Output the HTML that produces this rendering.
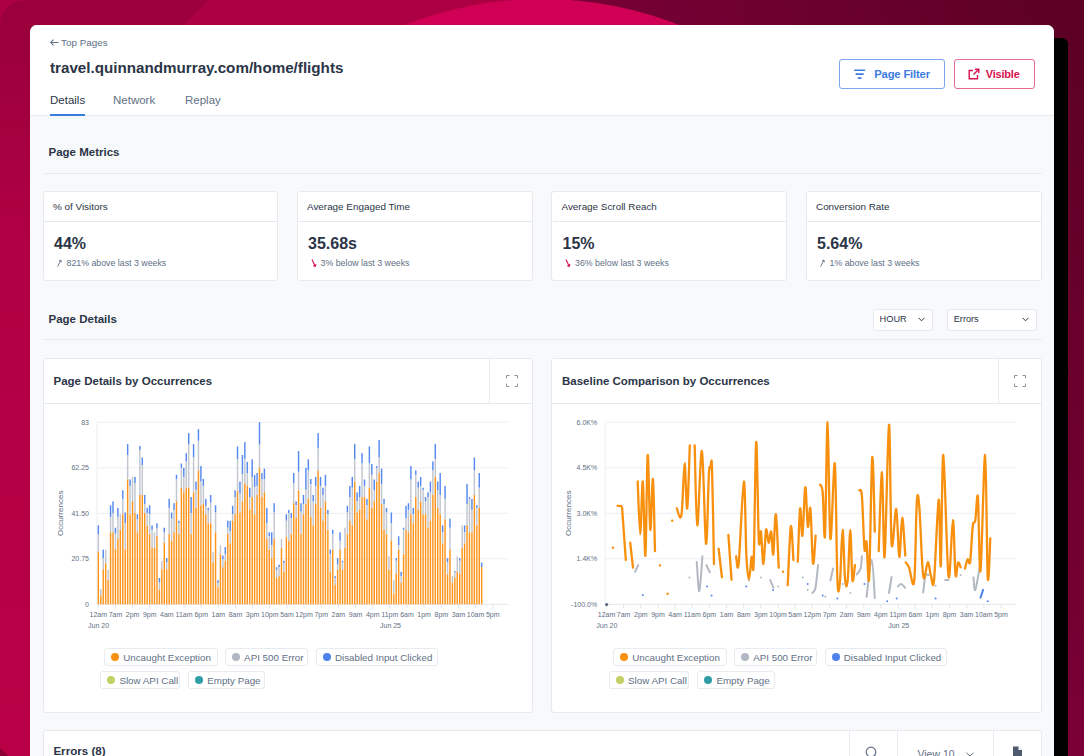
<!DOCTYPE html>
<html><head><meta charset="utf-8">
<style>
*{box-sizing:border-box;margin:0;padding:0}
html,body{width:1084px;height:756px;overflow:hidden}
body{position:relative;font-family:"Liberation Sans",sans-serif;color:#2b3547;background:#b00042}
.abs{position:absolute}
.bg{position:absolute;left:0;top:0}
.card{position:absolute;left:30px;top:25px;width:1024px;height:760px;background:#f8f9fa;border-radius:7px;overflow:hidden}
.shadow{position:absolute;left:1040px;top:38px;width:28px;height:760px;background:#000;border-radius:6px}
.hdr{position:absolute;left:0;top:0;width:1024px;height:91px;background:#fff;border-bottom:1px solid #e7eaee}
.t{position:absolute;white-space:nowrap;line-height:1}
.box{position:absolute;background:#fff;border:1px solid #e6e9ed;border-radius:3px}
.hline{position:absolute;height:1px;background:#e6e9ed}
.vline{position:absolute;width:1px;background:#e6e9ed}
.ax{font-family:"Liberation Sans",sans-serif;font-size:7px;fill:#617085}
.lg{position:absolute;height:18px;background:#fff;border:1px solid #e8ebef;border-radius:3px}
.lg i{position:absolute;left:6px;top:4px;width:8px;height:8px;border-radius:50%}
.lg span{position:absolute;left:18px;top:3.5px;font-size:9.8px;color:#617085;white-space:nowrap;line-height:1}
</style></head><body>
<svg class="bg" width="1084" height="756">
  <defs>
    <linearGradient id="cg" x1="0" y1="0" x2="0" y2="1">
      <stop offset="0" stop-color="#ad0042"/><stop offset="1" stop-color="#b90046"/>
    </linearGradient>
    <linearGradient id="sg" x1="0" y1="0" x2="0" y2="1"><stop offset="0" stop-color="#9c003c"/><stop offset="1" stop-color="#9c003c" stop-opacity="0"/></linearGradient>
    <linearGradient id="mg" x1="0" y1="0" x2="0" y2="1"><stop offset="0" stop-color="#5b0024"/><stop offset="1" stop-color="#7a0035"/></linearGradient><linearGradient id="mg2" x1="0" y1="0" x2="1" y2="0"><stop offset="0" stop-color="#7a0036" stop-opacity="1"/><stop offset="1" stop-color="#7a0036" stop-opacity="0"/></linearGradient>
  </defs>
  <rect width="1084" height="756" fill="url(#cg)"/>
  <rect x="545" y="0" width="539" height="756" fill="url(#mg)"/><rect x="545" y="0" width="539" height="40" fill="url(#mg2)"/>
  <path d="M28,0 L209,0 L175,34 L168,60 L0,60 L0,28 Q0,0 28,0Z" fill="#9c003c"/><rect x="0" y="40" width="30" height="200" fill="url(#sg)"/>
  <circle cx="542" cy="376" r="377" fill="#d00055"/>
  <polygon points="0,748 2,749.5 5,752.5 8,756 0,756" fill="#8c0035"/>
</svg>
<div class="shadow"></div>
<div class="card">
  <div class="hdr">
    <svg class="abs" style="left:19.5px;top:14px" width="9" height="7" fill="none" stroke="#617085" stroke-width="1.1"><path d="M0.8 3.5H8.5M3.5 0.6L0.8 3.5L3.5 6.4"/></svg><div class="t" style="left:31px;top:12.8px;font-size:9.9px;color:#617085">Top Pages</div>
    <div class="t" style="left:20px;top:35.2px;font-size:15.2px;font-weight:700;color:#2b3547">travel.quinnandmurray.com/home/flights</div>
    <div class="t" style="left:20px;top:69.8px;font-size:11.5px;color:#2b3547">Details</div>
    <div class="t" style="left:83px;top:69.8px;font-size:11.5px;color:#617085">Network</div>
    <div class="t" style="left:155px;top:69.8px;font-size:11.5px;color:#617085">Replay</div>
    <div class="abs" style="left:20px;top:89px;width:35px;height:2px;background:#3b7ddd"></div>
    <!-- buttons -->
    <div class="abs" style="left:808.5px;top:34px;width:106px;height:30px;border:1px solid #7ba5ee;border-radius:3px;background:#fff"></div>
    <svg class="abs" style="left:824px;top:44px" width="13" height="11"><rect x="0" y="0.5" width="11.3" height="1.6" rx=".8" fill="#3a7be0"/><rect x="1.4" y="4.3" width="8.5" height="1.6" rx=".8" fill="#3a7be0"/><rect x="3.5" y="8.3" width="4.2" height="1.6" rx=".8" fill="#3a7be0"/></svg>
    <div class="t" style="left:844.3px;top:43.5px;font-size:11.2px;font-weight:700;color:#3a7be0;letter-spacing:-0.15px">Page Filter</div>
    <div class="abs" style="left:923.5px;top:34px;width:81.5px;height:30px;border:1px solid #ea6a8c;border-radius:3px;background:#fff"></div>
    <svg class="abs" style="left:938px;top:43px" width="12" height="12" fill="none" stroke="#d6114f" stroke-width="1.4"><path d="M5 2.5H1.2V10.8H9.5V7"/><path d="M5.5 6.5L10.8 1.2M7 1.2H10.8V5"/></svg>
    <div class="t" style="left:955.7px;top:43.5px;font-size:11px;font-weight:700;color:#d6114f;letter-spacing:-0.2px">Visible</div>
  </div>

  <!-- Page Metrics -->
  <div class="t" style="left:18.5px;top:121.5px;font-size:11.5px;font-weight:700;color:#2b3547">Page Metrics</div>
  <div class="hline" style="left:13px;top:148px;width:999px;background:#e9ecef"></div>

  <div class="box" style="left:12.8px;top:166.2px;width:235.7px;height:90px"></div>
  <div class="box" style="left:266.8px;top:166.2px;width:236.2px;height:90px"></div>
  <div class="box" style="left:521.3px;top:166.2px;width:236.2px;height:90px"></div>
  <div class="box" style="left:775.8px;top:166.2px;width:236.2px;height:90px"></div>
  <div class="hline" style="left:14px;top:196px;width:233.5px"></div>
  <div class="hline" style="left:268px;top:196px;width:233.5px"></div>
  <div class="hline" style="left:522.5px;top:196px;width:234px"></div>
  <div class="hline" style="left:777px;top:196px;width:234px"></div>

  <div class="t" style="left:23px;top:176.8px;font-size:9.9px;color:#2b3547">% of Visitors</div>
  <div class="t" style="left:277px;top:176.8px;font-size:9.9px;color:#2b3547">Average Engaged Time</div>
  <div class="t" style="left:531.5px;top:176.8px;font-size:9.9px;color:#2b3547">Average Scroll Reach</div>
  <div class="t" style="left:786px;top:176.8px;font-size:9.9px;color:#2b3547">Conversion Rate</div>

  <div class="t" style="left:24px;top:210.5px;font-size:16px;font-weight:700;color:#2b3547">44%</div>
  <div class="t" style="left:278px;top:210.5px;font-size:16px;font-weight:700;color:#2b3547">35.68s</div>
  <div class="t" style="left:532.5px;top:210.5px;font-size:16px;font-weight:700;color:#2b3547">15%</div>
  <div class="t" style="left:787px;top:210.5px;font-size:16px;font-weight:700;color:#2b3547">5.64%</div>

  <svg class="abs" style="left:25.5px;top:234px" width="8" height="8" fill="none" stroke="#617085" stroke-width="0.9"><path d="M1.6 7.6L4.9 1.2M2.9 1.9L4.9 1.2L5.4 3.3"/></svg>
  <div class="t" style="left:36.5px;top:234px;font-size:8.8px;color:#617085">821% above last 3 weeks</div>
  <svg class="abs" style="left:279.5px;top:234px" width="8" height="8" fill="none" stroke="#d6114f" stroke-width="1.1"><path d="M2 0.5L5.2 7.3M3.2 6.8L5.3 7.4L5.9 5.2"/></svg>
  <div class="t" style="left:290.5px;top:234px;font-size:8.8px;color:#617085">3% below last 3 weeks</div>
  <svg class="abs" style="left:534px;top:234px" width="8" height="8" fill="none" stroke="#d6114f" stroke-width="1.1"><path d="M2 0.5L5.2 7.3M3.2 6.8L5.3 7.4L5.9 5.2"/></svg>
  <div class="t" style="left:545px;top:234px;font-size:8.8px;color:#617085">36% below last 3 weeks</div>
  <svg class="abs" style="left:788.5px;top:234px" width="8" height="8" fill="none" stroke="#617085" stroke-width="0.9"><path d="M1.6 7.6L4.9 1.2M2.9 1.9L4.9 1.2L5.4 3.3"/></svg>
  <div class="t" style="left:799.5px;top:234px;font-size:8.8px;color:#617085">1% above last 3 weeks</div>

  <!-- Page Details -->
  <div class="t" style="left:18.5px;top:289.1px;font-size:11.5px;font-weight:700;color:#2b3547">Page Details</div>
  <div class="hline" style="left:13px;top:314.3px;width:999px;background:#e9ecef"></div>
  <div class="box" style="left:843px;top:283.5px;width:59.5px;height:22px"></div>
  <div class="t" style="left:849.6px;top:289.7px;font-size:9.2px;color:#2b3547">HOUR</div>
  <svg class="abs" style="left:887.5px;top:292px" width="7" height="5" fill="none" stroke="#2b3547" stroke-width="1"><path d="M0.5 0.8L3.5 3.8L6.5 0.8"/></svg>
  <div class="box" style="left:917px;top:283.5px;width:89.5px;height:22px"></div>
  <div class="t" style="left:923.7px;top:289.7px;font-size:9.2px;color:#2b3547">Errors</div>
  <svg class="abs" style="left:991.5px;top:292px" width="7" height="5" fill="none" stroke="#2b3547" stroke-width="1"><path d="M0.5 0.8L3.5 3.8L6.5 0.8"/></svg>

  <!-- chart cards -->
  <div class="box" style="left:12.5px;top:333px;width:490.7px;height:354.5px"></div>
  <div class="hline" style="left:13.7px;top:378px;width:488.5px"></div>
  <div class="vline" style="left:459px;top:334px;height:44px"></div>
  <div class="t" style="left:23.5px;top:351px;font-size:11.5px;font-weight:700;color:#2b3547">Page Details by Occurrences</div>
  <svg class="abs" style="left:475.5px;top:350px" width="13" height="13" fill="none" stroke="#7f8899" stroke-width="0.9"><path d="M0.5 3.5V0.5H3.5M8.5 0.5H11.5V3.5M11.5 8.5V11.5H8.5M3.5 11.5H0.5V8.5"/></svg>

  <div class="box" style="left:521px;top:333px;width:491px;height:354.5px"></div>
  <div class="hline" style="left:522.2px;top:378px;width:488.8px"></div>
  <div class="vline" style="left:968px;top:334px;height:44px"></div>
  <div class="t" style="left:532px;top:351px;font-size:11.5px;font-weight:700;color:#2b3547">Baseline Comparison by Occurrences</div>
  <svg class="abs" style="left:984px;top:350px" width="13" height="13" fill="none" stroke="#7f8899" stroke-width="0.9"><path d="M0.5 3.5V0.5H3.5M8.5 0.5H11.5V3.5M11.5 8.5V11.5H8.5M3.5 11.5H0.5V8.5"/></svg>

  <!-- legends left -->
  <div class="lg" style="left:74.2px;top:623px;width:113.7px"><i style="background:#f8900f"></i><span>Uncaught Exception</span></div>
  <div class="lg" style="left:195.1px;top:623px;width:83.2px"><i style="background:#b3b9c3"></i><span>API 500 Error</span></div>
  <div class="lg" style="left:285.9px;top:623px;width:122.6px"><i style="background:#4f83ec"></i><span>Disabled Input Clicked</span></div>
  <div class="lg" style="left:70.4px;top:646.4px;width:80.1px"><i style="background:#c3d163"></i><span>Slow API Call</span></div>
  <div class="lg" style="left:158.2px;top:646.4px;width:77.2px"><i style="background:#2e9ea6"></i><span>Empty Page</span></div>
  <!-- legends right -->
  <div class="lg" style="left:583.2px;top:623px;width:113.7px"><i style="background:#f8900f"></i><span>Uncaught Exception</span></div>
  <div class="lg" style="left:704.2px;top:623px;width:83.2px"><i style="background:#b3b9c3"></i><span>API 500 Error</span></div>
  <div class="lg" style="left:794.8px;top:623px;width:122.6px"><i style="background:#4f83ec"></i><span>Disabled Input Clicked</span></div>
  <div class="lg" style="left:579px;top:646.4px;width:80.1px"><i style="background:#c3d163"></i><span>Slow API Call</span></div>
  <div class="lg" style="left:667.4px;top:646.4px;width:77.2px"><i style="background:#2e9ea6"></i><span>Empty Page</span></div>

  <!-- errors card -->
  <div class="box" style="left:12.7px;top:705px;width:999.5px;height:80px"></div>
  <div class="t" style="left:23.4px;top:719.5px;font-size:11.6px;font-weight:700;color:#2b3547">Errors (8)</div>
  <div class="vline" style="left:819px;top:706px;height:60px"></div>
  <div class="vline" style="left:867px;top:706px;height:60px"></div>
  <div class="vline" style="left:963px;top:706px;height:60px"></div>
  <svg class="abs" style="left:835px;top:720.5px" width="13" height="13" fill="none" stroke="#617085" stroke-width="1.2"><circle cx="6" cy="6" r="4.8"/><path d="M9.5 9.5L12.5 12.5"/></svg>
  <div class="t" style="left:887.4px;top:724px;font-size:10.5px;color:#617085">View 10</div>
  <svg class="abs" style="left:935.5px;top:727px" width="8" height="5" fill="none" stroke="#617085" stroke-width="1"><path d="M0.5 0.8L4 4L7.5 0.8"/></svg>
  <svg class="abs" style="left:982px;top:721px" width="11" height="13"><path d="M1 0.5H6.5L10 4V13H1Z" fill="#4f5a6c"/><path d="M6.5 0.5V4H10" fill="#fff"/></svg>
</div>

<svg class="abs" style="left:0;top:0" width="1084" height="756">
<line x1="97" y1="422.2" x2="508" y2="422.2" stroke="#eceef2" stroke-width="1"/>
<line x1="97" y1="467.8" x2="508" y2="467.8" stroke="#eceef2" stroke-width="1"/>
<line x1="97" y1="513.3" x2="508" y2="513.3" stroke="#eceef2" stroke-width="1"/>
<line x1="97" y1="558.8" x2="508" y2="558.8" stroke="#eceef2" stroke-width="1"/>
<line x1="97" y1="604.3" x2="508" y2="604.3" stroke="#e3e6ea" stroke-width="1"/>
<line x1="97" y1="422.2" x2="97" y2="604.3" stroke="#eceef2" stroke-width="1"/>
<text x="89" y="424.8" text-anchor="end" class="ax">83</text>
<text x="89" y="470.40000000000003" text-anchor="end" class="ax">62.25</text>
<text x="89" y="515.9" text-anchor="end" class="ax">41.50</text>
<text x="89" y="561.4" text-anchor="end" class="ax">20.75</text>
<text x="89" y="606.9" text-anchor="end" class="ax">0</text>
<line x1="98.30" y1="604.3" x2="98.30" y2="608" stroke="#e1e4e9" stroke-width="1"/>
<text x="98.30" y="617.3" text-anchor="middle" class="ax">12am</text>
<line x1="115.45" y1="604.3" x2="115.45" y2="608" stroke="#e1e4e9" stroke-width="1"/>
<text x="115.45" y="617.3" text-anchor="middle" class="ax">7am</text>
<line x1="132.60" y1="604.3" x2="132.60" y2="608" stroke="#e1e4e9" stroke-width="1"/>
<text x="132.60" y="617.3" text-anchor="middle" class="ax">2pm</text>
<line x1="149.75" y1="604.3" x2="149.75" y2="608" stroke="#e1e4e9" stroke-width="1"/>
<text x="149.75" y="617.3" text-anchor="middle" class="ax">9pm</text>
<line x1="166.90" y1="604.3" x2="166.90" y2="608" stroke="#e1e4e9" stroke-width="1"/>
<text x="166.90" y="617.3" text-anchor="middle" class="ax">4am</text>
<line x1="184.05" y1="604.3" x2="184.05" y2="608" stroke="#e1e4e9" stroke-width="1"/>
<text x="184.05" y="617.3" text-anchor="middle" class="ax">11am</text>
<line x1="201.20" y1="604.3" x2="201.20" y2="608" stroke="#e1e4e9" stroke-width="1"/>
<text x="201.20" y="617.3" text-anchor="middle" class="ax">6pm</text>
<line x1="218.35" y1="604.3" x2="218.35" y2="608" stroke="#e1e4e9" stroke-width="1"/>
<text x="218.35" y="617.3" text-anchor="middle" class="ax">1am</text>
<line x1="235.50" y1="604.3" x2="235.50" y2="608" stroke="#e1e4e9" stroke-width="1"/>
<text x="235.50" y="617.3" text-anchor="middle" class="ax">8am</text>
<line x1="252.65" y1="604.3" x2="252.65" y2="608" stroke="#e1e4e9" stroke-width="1"/>
<text x="252.65" y="617.3" text-anchor="middle" class="ax">3pm</text>
<line x1="269.80" y1="604.3" x2="269.80" y2="608" stroke="#e1e4e9" stroke-width="1"/>
<text x="269.80" y="617.3" text-anchor="middle" class="ax">10pm</text>
<line x1="286.95" y1="604.3" x2="286.95" y2="608" stroke="#e1e4e9" stroke-width="1"/>
<text x="286.95" y="617.3" text-anchor="middle" class="ax">5am</text>
<line x1="304.10" y1="604.3" x2="304.10" y2="608" stroke="#e1e4e9" stroke-width="1"/>
<text x="304.10" y="617.3" text-anchor="middle" class="ax">12pm</text>
<line x1="321.25" y1="604.3" x2="321.25" y2="608" stroke="#e1e4e9" stroke-width="1"/>
<text x="321.25" y="617.3" text-anchor="middle" class="ax">7pm</text>
<line x1="338.40" y1="604.3" x2="338.40" y2="608" stroke="#e1e4e9" stroke-width="1"/>
<text x="338.40" y="617.3" text-anchor="middle" class="ax">2am</text>
<line x1="355.55" y1="604.3" x2="355.55" y2="608" stroke="#e1e4e9" stroke-width="1"/>
<text x="355.55" y="617.3" text-anchor="middle" class="ax">9am</text>
<line x1="372.70" y1="604.3" x2="372.70" y2="608" stroke="#e1e4e9" stroke-width="1"/>
<text x="372.70" y="617.3" text-anchor="middle" class="ax">4pm</text>
<line x1="389.85" y1="604.3" x2="389.85" y2="608" stroke="#e1e4e9" stroke-width="1"/>
<text x="389.85" y="617.3" text-anchor="middle" class="ax">11pm</text>
<line x1="407.00" y1="604.3" x2="407.00" y2="608" stroke="#e1e4e9" stroke-width="1"/>
<text x="407.00" y="617.3" text-anchor="middle" class="ax">6am</text>
<line x1="424.15" y1="604.3" x2="424.15" y2="608" stroke="#e1e4e9" stroke-width="1"/>
<text x="424.15" y="617.3" text-anchor="middle" class="ax">1pm</text>
<line x1="441.30" y1="604.3" x2="441.30" y2="608" stroke="#e1e4e9" stroke-width="1"/>
<text x="441.30" y="617.3" text-anchor="middle" class="ax">8pm</text>
<line x1="458.45" y1="604.3" x2="458.45" y2="608" stroke="#e1e4e9" stroke-width="1"/>
<text x="458.45" y="617.3" text-anchor="middle" class="ax">3am</text>
<line x1="475.60" y1="604.3" x2="475.60" y2="608" stroke="#e1e4e9" stroke-width="1"/>
<text x="475.60" y="617.3" text-anchor="middle" class="ax">10am</text>
<line x1="492.75" y1="604.3" x2="492.75" y2="608" stroke="#e1e4e9" stroke-width="1"/>
<text x="492.75" y="617.3" text-anchor="middle" class="ax">5pm</text>
<text x="98.6" y="627.5" text-anchor="middle" class="ax">Jun 20</text>
<text x="390.5" y="627.5" text-anchor="middle" class="ax">Jun 25</text>
<text transform="translate(63.2,513.3) rotate(-90)" text-anchor="middle" class="ax" style="font-size:8px">Occurrences</text>
<rect x="97.62" y="525.39" width="1.45" height="8.77" fill="#5689f0"/>
<rect x="97.62" y="534.16" width="1.45" height="17.54" fill="#c1c6cf"/>
<rect x="97.62" y="551.70" width="1.45" height="52.60" fill="#fd951c"/>
<rect x="100.07" y="589.10" width="1.45" height="6.45" fill="#c1c6cf"/>
<rect x="100.07" y="595.55" width="1.45" height="8.75" fill="#fd951c"/>
<rect x="102.51" y="549.64" width="1.45" height="8.51" fill="#5689f0"/>
<rect x="102.51" y="558.15" width="1.45" height="11.09" fill="#c1c6cf"/>
<rect x="102.51" y="569.24" width="1.45" height="35.06" fill="#fd951c"/>
<rect x="104.95" y="549.64" width="1.45" height="13.67" fill="#c1c6cf"/>
<rect x="104.95" y="563.31" width="1.45" height="40.99" fill="#fd951c"/>
<rect x="107.39" y="569.76" width="1.45" height="10.32" fill="#c1c6cf"/>
<rect x="107.39" y="580.08" width="1.45" height="24.22" fill="#fd951c"/>
<rect x="109.83" y="505.28" width="1.45" height="11.61" fill="#5689f0"/>
<rect x="109.83" y="516.88" width="1.45" height="15.48" fill="#c1c6cf"/>
<rect x="109.83" y="532.36" width="1.45" height="71.94" fill="#fd951c"/>
<rect x="112.28" y="501.41" width="1.45" height="11.61" fill="#5689f0"/>
<rect x="112.28" y="513.01" width="1.45" height="19.34" fill="#c1c6cf"/>
<rect x="112.28" y="532.36" width="1.45" height="71.94" fill="#fd951c"/>
<rect x="114.72" y="527.72" width="1.45" height="5.93" fill="#5689f0"/>
<rect x="114.72" y="533.65" width="1.45" height="15.48" fill="#c1c6cf"/>
<rect x="114.72" y="549.12" width="1.45" height="55.18" fill="#fd951c"/>
<rect x="117.16" y="507.86" width="1.45" height="9.03" fill="#5689f0"/>
<rect x="117.16" y="516.88" width="1.45" height="21.92" fill="#c1c6cf"/>
<rect x="117.16" y="538.81" width="1.45" height="65.49" fill="#fd951c"/>
<rect x="119.60" y="514.30" width="1.45" height="15.48" fill="#c1c6cf"/>
<rect x="119.60" y="529.78" width="1.45" height="74.52" fill="#fd951c"/>
<rect x="122.04" y="490.32" width="1.45" height="8.51" fill="#5689f0"/>
<rect x="122.04" y="498.83" width="1.45" height="15.48" fill="#c1c6cf"/>
<rect x="122.04" y="514.30" width="1.45" height="90.00" fill="#fd951c"/>
<rect x="124.48" y="512.50" width="1.45" height="10.83" fill="#5689f0"/>
<rect x="124.48" y="523.33" width="1.45" height="25.79" fill="#c1c6cf"/>
<rect x="124.48" y="549.12" width="1.45" height="55.18" fill="#fd951c"/>
<rect x="126.93" y="444.15" width="1.45" height="10.83" fill="#5689f0"/>
<rect x="126.93" y="454.98" width="1.45" height="24.50" fill="#c1c6cf"/>
<rect x="126.93" y="479.48" width="1.45" height="124.82" fill="#fd951c"/>
<rect x="129.37" y="479.48" width="1.45" height="6.45" fill="#5689f0"/>
<rect x="129.37" y="485.93" width="1.45" height="28.37" fill="#c1c6cf"/>
<rect x="129.37" y="514.30" width="1.45" height="90.00" fill="#fd951c"/>
<rect x="131.81" y="476.90" width="1.45" height="24.50" fill="#c1c6cf"/>
<rect x="131.81" y="501.41" width="1.45" height="102.89" fill="#fd951c"/>
<rect x="134.25" y="476.90" width="1.45" height="6.45" fill="#5689f0"/>
<rect x="134.25" y="483.35" width="1.45" height="29.66" fill="#c1c6cf"/>
<rect x="134.25" y="513.01" width="1.45" height="91.29" fill="#fd951c"/>
<rect x="136.69" y="514.30" width="1.45" height="5.16" fill="#5689f0"/>
<rect x="136.69" y="519.46" width="1.45" height="12.90" fill="#c1c6cf"/>
<rect x="136.69" y="532.36" width="1.45" height="71.94" fill="#fd951c"/>
<rect x="139.13" y="445.95" width="1.45" height="4.38" fill="#5689f0"/>
<rect x="139.13" y="450.34" width="1.45" height="44.62" fill="#c1c6cf"/>
<rect x="139.13" y="494.96" width="1.45" height="109.34" fill="#fd951c"/>
<rect x="141.58" y="457.56" width="1.45" height="7.74" fill="#5689f0"/>
<rect x="141.58" y="465.30" width="1.45" height="29.66" fill="#c1c6cf"/>
<rect x="141.58" y="494.96" width="1.45" height="109.34" fill="#fd951c"/>
<rect x="144.02" y="494.96" width="1.45" height="9.03" fill="#5689f0"/>
<rect x="144.02" y="503.99" width="1.45" height="9.03" fill="#c1c6cf"/>
<rect x="144.02" y="513.01" width="1.45" height="91.29" fill="#fd951c"/>
<rect x="146.46" y="507.86" width="1.45" height="5.16" fill="#5689f0"/>
<rect x="146.46" y="513.01" width="1.45" height="12.90" fill="#c1c6cf"/>
<rect x="146.46" y="525.91" width="1.45" height="78.39" fill="#fd951c"/>
<rect x="148.90" y="505.28" width="1.45" height="9.03" fill="#5689f0"/>
<rect x="148.90" y="514.30" width="1.45" height="19.86" fill="#c1c6cf"/>
<rect x="148.90" y="534.16" width="1.45" height="70.14" fill="#fd951c"/>
<rect x="151.34" y="525.39" width="1.45" height="4.38" fill="#5689f0"/>
<rect x="151.34" y="529.78" width="1.45" height="18.06" fill="#c1c6cf"/>
<rect x="151.34" y="547.83" width="1.45" height="56.47" fill="#fd951c"/>
<rect x="153.78" y="532.36" width="1.45" height="15.48" fill="#c1c6cf"/>
<rect x="153.78" y="547.83" width="1.45" height="56.47" fill="#fd951c"/>
<rect x="156.23" y="523.33" width="1.45" height="5.16" fill="#5689f0"/>
<rect x="156.23" y="528.49" width="1.45" height="7.74" fill="#c1c6cf"/>
<rect x="156.23" y="536.23" width="1.45" height="68.07" fill="#fd951c"/>
<rect x="158.67" y="578.01" width="1.45" height="4.64" fill="#5689f0"/>
<rect x="158.67" y="582.66" width="1.45" height="7.22" fill="#c1c6cf"/>
<rect x="158.67" y="589.88" width="1.45" height="14.42" fill="#fd951c"/>
<rect x="161.11" y="560.73" width="1.45" height="8.51" fill="#c1c6cf"/>
<rect x="161.11" y="569.24" width="1.45" height="35.06" fill="#fd951c"/>
<rect x="163.55" y="527.72" width="1.45" height="4.64" fill="#5689f0"/>
<rect x="163.55" y="532.36" width="1.45" height="10.32" fill="#c1c6cf"/>
<rect x="163.55" y="542.68" width="1.45" height="61.62" fill="#fd951c"/>
<rect x="165.99" y="558.15" width="1.45" height="4.38" fill="#5689f0"/>
<rect x="165.99" y="562.54" width="1.45" height="6.71" fill="#c1c6cf"/>
<rect x="165.99" y="569.24" width="1.45" height="35.06" fill="#fd951c"/>
<rect x="168.43" y="498.83" width="1.45" height="9.03" fill="#5689f0"/>
<rect x="168.43" y="507.86" width="1.45" height="26.31" fill="#c1c6cf"/>
<rect x="168.43" y="534.16" width="1.45" height="70.14" fill="#fd951c"/>
<rect x="170.88" y="512.50" width="1.45" height="6.19" fill="#5689f0"/>
<rect x="170.88" y="518.69" width="1.45" height="22.18" fill="#c1c6cf"/>
<rect x="170.88" y="540.87" width="1.45" height="63.43" fill="#fd951c"/>
<rect x="173.32" y="503.21" width="1.45" height="6.71" fill="#5689f0"/>
<rect x="173.32" y="509.92" width="1.45" height="22.44" fill="#c1c6cf"/>
<rect x="173.32" y="532.36" width="1.45" height="71.94" fill="#fd951c"/>
<rect x="175.76" y="474.84" width="1.45" height="4.64" fill="#5689f0"/>
<rect x="175.76" y="479.48" width="1.45" height="21.92" fill="#c1c6cf"/>
<rect x="175.76" y="501.41" width="1.45" height="102.89" fill="#fd951c"/>
<rect x="178.20" y="520.75" width="1.45" height="2.58" fill="#5689f0"/>
<rect x="178.20" y="523.33" width="1.45" height="10.83" fill="#c1c6cf"/>
<rect x="178.20" y="534.16" width="1.45" height="70.14" fill="#fd951c"/>
<rect x="180.64" y="463.49" width="1.45" height="4.38" fill="#5689f0"/>
<rect x="180.64" y="467.88" width="1.45" height="19.86" fill="#c1c6cf"/>
<rect x="180.64" y="487.74" width="1.45" height="116.56" fill="#fd951c"/>
<rect x="183.08" y="467.88" width="1.45" height="9.03" fill="#5689f0"/>
<rect x="183.08" y="476.90" width="1.45" height="15.48" fill="#c1c6cf"/>
<rect x="183.08" y="492.38" width="1.45" height="111.92" fill="#fd951c"/>
<rect x="185.53" y="453.17" width="1.45" height="8.25" fill="#5689f0"/>
<rect x="185.53" y="461.43" width="1.45" height="26.31" fill="#c1c6cf"/>
<rect x="185.53" y="487.74" width="1.45" height="116.56" fill="#fd951c"/>
<rect x="187.97" y="433.06" width="1.45" height="11.61" fill="#5689f0"/>
<rect x="187.97" y="444.66" width="1.45" height="43.07" fill="#c1c6cf"/>
<rect x="187.97" y="487.74" width="1.45" height="116.56" fill="#fd951c"/>
<rect x="190.41" y="497.02" width="1.45" height="15.99" fill="#5689f0"/>
<rect x="190.41" y="513.01" width="1.45" height="21.15" fill="#c1c6cf"/>
<rect x="190.41" y="534.16" width="1.45" height="70.14" fill="#fd951c"/>
<rect x="192.85" y="444.15" width="1.45" height="13.41" fill="#5689f0"/>
<rect x="192.85" y="457.56" width="1.45" height="34.82" fill="#c1c6cf"/>
<rect x="192.85" y="492.38" width="1.45" height="111.92" fill="#fd951c"/>
<rect x="195.29" y="481.55" width="1.45" height="8.25" fill="#5689f0"/>
<rect x="195.29" y="489.80" width="1.45" height="18.06" fill="#c1c6cf"/>
<rect x="195.29" y="507.86" width="1.45" height="96.44" fill="#fd951c"/>
<rect x="197.73" y="429.19" width="1.45" height="11.61" fill="#5689f0"/>
<rect x="197.73" y="440.79" width="1.45" height="29.66" fill="#c1c6cf"/>
<rect x="197.73" y="470.46" width="1.45" height="133.84" fill="#fd951c"/>
<rect x="200.18" y="466.07" width="1.45" height="15.48" fill="#5689f0"/>
<rect x="200.18" y="481.55" width="1.45" height="23.73" fill="#c1c6cf"/>
<rect x="200.18" y="505.28" width="1.45" height="99.02" fill="#fd951c"/>
<rect x="202.62" y="478.97" width="1.45" height="6.96" fill="#5689f0"/>
<rect x="202.62" y="485.93" width="1.45" height="18.06" fill="#c1c6cf"/>
<rect x="202.62" y="503.99" width="1.45" height="100.31" fill="#fd951c"/>
<rect x="205.06" y="498.83" width="1.45" height="7.74" fill="#5689f0"/>
<rect x="205.06" y="506.57" width="1.45" height="7.74" fill="#c1c6cf"/>
<rect x="205.06" y="514.30" width="1.45" height="90.00" fill="#fd951c"/>
<rect x="207.50" y="507.86" width="1.45" height="2.58" fill="#5689f0"/>
<rect x="207.50" y="510.43" width="1.45" height="12.90" fill="#c1c6cf"/>
<rect x="207.50" y="523.33" width="1.45" height="80.97" fill="#fd951c"/>
<rect x="209.94" y="494.96" width="1.45" height="7.74" fill="#5689f0"/>
<rect x="209.94" y="502.70" width="1.45" height="20.63" fill="#c1c6cf"/>
<rect x="209.94" y="523.33" width="1.45" height="80.97" fill="#fd951c"/>
<rect x="212.38" y="551.70" width="1.45" height="10.83" fill="#c1c6cf"/>
<rect x="212.38" y="562.54" width="1.45" height="41.76" fill="#fd951c"/>
<rect x="214.83" y="505.28" width="1.45" height="7.22" fill="#5689f0"/>
<rect x="214.83" y="512.50" width="1.45" height="19.86" fill="#c1c6cf"/>
<rect x="214.83" y="532.36" width="1.45" height="71.94" fill="#fd951c"/>
<rect x="217.27" y="580.08" width="1.45" height="3.10" fill="#5689f0"/>
<rect x="217.27" y="583.17" width="1.45" height="4.13" fill="#c1c6cf"/>
<rect x="217.27" y="587.30" width="1.45" height="17.00" fill="#fd951c"/>
<rect x="219.71" y="545.26" width="1.45" height="9.03" fill="#c1c6cf"/>
<rect x="219.71" y="554.28" width="1.45" height="50.02" fill="#fd951c"/>
<rect x="222.15" y="555.57" width="1.45" height="3.87" fill="#5689f0"/>
<rect x="222.15" y="559.44" width="1.45" height="7.74" fill="#c1c6cf"/>
<rect x="222.15" y="567.18" width="1.45" height="37.12" fill="#fd951c"/>
<rect x="224.59" y="547.06" width="1.45" height="7.22" fill="#5689f0"/>
<rect x="224.59" y="554.28" width="1.45" height="6.45" fill="#c1c6cf"/>
<rect x="224.59" y="560.73" width="1.45" height="43.57" fill="#fd951c"/>
<rect x="227.04" y="520.75" width="1.45" height="6.96" fill="#5689f0"/>
<rect x="227.04" y="527.72" width="1.45" height="6.45" fill="#c1c6cf"/>
<rect x="227.04" y="534.16" width="1.45" height="70.14" fill="#fd951c"/>
<rect x="229.48" y="520.75" width="1.45" height="10.32" fill="#5689f0"/>
<rect x="229.48" y="531.07" width="1.45" height="12.38" fill="#c1c6cf"/>
<rect x="229.48" y="543.45" width="1.45" height="60.85" fill="#fd951c"/>
<rect x="231.92" y="505.79" width="1.45" height="8.51" fill="#5689f0"/>
<rect x="231.92" y="514.30" width="1.45" height="6.45" fill="#c1c6cf"/>
<rect x="231.92" y="520.75" width="1.45" height="83.55" fill="#fd951c"/>
<rect x="234.36" y="490.32" width="1.45" height="6.71" fill="#5689f0"/>
<rect x="234.36" y="497.02" width="1.45" height="17.28" fill="#c1c6cf"/>
<rect x="234.36" y="514.30" width="1.45" height="90.00" fill="#fd951c"/>
<rect x="236.80" y="446.47" width="1.45" height="12.90" fill="#5689f0"/>
<rect x="236.80" y="459.36" width="1.45" height="31.73" fill="#c1c6cf"/>
<rect x="236.80" y="491.09" width="1.45" height="113.21" fill="#fd951c"/>
<rect x="239.24" y="481.55" width="1.45" height="12.12" fill="#5689f0"/>
<rect x="239.24" y="493.67" width="1.45" height="18.83" fill="#c1c6cf"/>
<rect x="239.24" y="512.50" width="1.45" height="91.80" fill="#fd951c"/>
<rect x="241.69" y="454.98" width="1.45" height="19.34" fill="#5689f0"/>
<rect x="241.69" y="474.32" width="1.45" height="27.08" fill="#c1c6cf"/>
<rect x="241.69" y="501.41" width="1.45" height="102.89" fill="#fd951c"/>
<rect x="244.13" y="442.08" width="1.45" height="16.77" fill="#5689f0"/>
<rect x="244.13" y="458.85" width="1.45" height="24.50" fill="#c1c6cf"/>
<rect x="244.13" y="483.35" width="1.45" height="120.95" fill="#fd951c"/>
<rect x="246.57" y="461.94" width="1.45" height="11.09" fill="#5689f0"/>
<rect x="246.57" y="473.03" width="1.45" height="12.90" fill="#c1c6cf"/>
<rect x="246.57" y="485.93" width="1.45" height="118.37" fill="#fd951c"/>
<rect x="249.01" y="487.74" width="1.45" height="9.29" fill="#5689f0"/>
<rect x="249.01" y="497.02" width="1.45" height="12.90" fill="#c1c6cf"/>
<rect x="249.01" y="509.92" width="1.45" height="94.38" fill="#fd951c"/>
<rect x="251.45" y="459.36" width="1.45" height="17.54" fill="#5689f0"/>
<rect x="251.45" y="476.90" width="1.45" height="20.12" fill="#c1c6cf"/>
<rect x="251.45" y="497.02" width="1.45" height="107.28" fill="#fd951c"/>
<rect x="253.89" y="474.84" width="1.45" height="12.38" fill="#5689f0"/>
<rect x="253.89" y="487.22" width="1.45" height="27.08" fill="#c1c6cf"/>
<rect x="253.89" y="514.30" width="1.45" height="90.00" fill="#fd951c"/>
<rect x="256.34" y="473.03" width="1.45" height="12.90" fill="#5689f0"/>
<rect x="256.34" y="485.93" width="1.45" height="9.03" fill="#c1c6cf"/>
<rect x="256.34" y="494.96" width="1.45" height="109.34" fill="#fd951c"/>
<rect x="258.78" y="422.22" width="1.45" height="22.44" fill="#5689f0"/>
<rect x="258.78" y="444.66" width="1.45" height="23.21" fill="#c1c6cf"/>
<rect x="258.78" y="467.88" width="1.45" height="136.42" fill="#fd951c"/>
<rect x="261.22" y="473.03" width="1.45" height="6.45" fill="#5689f0"/>
<rect x="261.22" y="479.48" width="1.45" height="17.54" fill="#c1c6cf"/>
<rect x="261.22" y="497.02" width="1.45" height="107.28" fill="#fd951c"/>
<rect x="263.66" y="468.65" width="1.45" height="10.83" fill="#5689f0"/>
<rect x="263.66" y="479.48" width="1.45" height="12.90" fill="#c1c6cf"/>
<rect x="263.66" y="492.38" width="1.45" height="111.92" fill="#fd951c"/>
<rect x="266.10" y="507.86" width="1.45" height="15.48" fill="#5689f0"/>
<rect x="266.10" y="523.33" width="1.45" height="15.48" fill="#c1c6cf"/>
<rect x="266.10" y="538.81" width="1.45" height="65.49" fill="#fd951c"/>
<rect x="268.54" y="532.36" width="1.45" height="3.87" fill="#5689f0"/>
<rect x="268.54" y="536.23" width="1.45" height="13.41" fill="#c1c6cf"/>
<rect x="268.54" y="549.64" width="1.45" height="54.66" fill="#fd951c"/>
<rect x="270.99" y="532.36" width="1.45" height="12.90" fill="#5689f0"/>
<rect x="270.99" y="545.26" width="1.45" height="12.90" fill="#c1c6cf"/>
<rect x="270.99" y="558.15" width="1.45" height="46.15" fill="#fd951c"/>
<rect x="273.43" y="503.21" width="1.45" height="9.29" fill="#5689f0"/>
<rect x="273.43" y="512.50" width="1.45" height="26.31" fill="#c1c6cf"/>
<rect x="273.43" y="538.81" width="1.45" height="65.49" fill="#fd951c"/>
<rect x="275.87" y="567.18" width="1.45" height="2.58" fill="#5689f0"/>
<rect x="275.87" y="569.76" width="1.45" height="8.25" fill="#c1c6cf"/>
<rect x="275.87" y="578.01" width="1.45" height="26.29" fill="#fd951c"/>
<rect x="278.31" y="564.60" width="1.45" height="2.58" fill="#5689f0"/>
<rect x="278.31" y="567.18" width="1.45" height="9.03" fill="#c1c6cf"/>
<rect x="278.31" y="576.21" width="1.45" height="28.09" fill="#fd951c"/>
<rect x="280.75" y="538.81" width="1.45" height="9.03" fill="#c1c6cf"/>
<rect x="280.75" y="547.83" width="1.45" height="56.47" fill="#fd951c"/>
<rect x="283.19" y="560.73" width="1.45" height="2.58" fill="#5689f0"/>
<rect x="283.19" y="563.31" width="1.45" height="8.51" fill="#c1c6cf"/>
<rect x="283.19" y="571.82" width="1.45" height="32.48" fill="#fd951c"/>
<rect x="285.64" y="514.30" width="1.45" height="6.45" fill="#5689f0"/>
<rect x="285.64" y="520.75" width="1.45" height="15.99" fill="#c1c6cf"/>
<rect x="285.64" y="536.74" width="1.45" height="67.56" fill="#fd951c"/>
<rect x="288.08" y="509.92" width="1.45" height="3.10" fill="#5689f0"/>
<rect x="288.08" y="513.01" width="1.45" height="27.86" fill="#c1c6cf"/>
<rect x="288.08" y="540.87" width="1.45" height="63.43" fill="#fd951c"/>
<rect x="290.52" y="513.01" width="1.45" height="5.16" fill="#5689f0"/>
<rect x="290.52" y="518.17" width="1.45" height="15.99" fill="#c1c6cf"/>
<rect x="290.52" y="534.16" width="1.45" height="70.14" fill="#fd951c"/>
<rect x="292.96" y="473.03" width="1.45" height="10.32" fill="#5689f0"/>
<rect x="292.96" y="483.35" width="1.45" height="19.86" fill="#c1c6cf"/>
<rect x="292.96" y="503.21" width="1.45" height="101.09" fill="#fd951c"/>
<rect x="295.40" y="501.41" width="1.45" height="3.87" fill="#5689f0"/>
<rect x="295.40" y="505.28" width="1.45" height="12.90" fill="#c1c6cf"/>
<rect x="295.40" y="518.17" width="1.45" height="86.13" fill="#fd951c"/>
<rect x="297.84" y="451.11" width="1.45" height="20.63" fill="#5689f0"/>
<rect x="297.84" y="471.74" width="1.45" height="18.57" fill="#c1c6cf"/>
<rect x="297.84" y="490.32" width="1.45" height="113.98" fill="#fd951c"/>
<rect x="300.29" y="503.21" width="1.45" height="8.51" fill="#5689f0"/>
<rect x="300.29" y="511.72" width="1.45" height="22.44" fill="#c1c6cf"/>
<rect x="300.29" y="534.16" width="1.45" height="70.14" fill="#fd951c"/>
<rect x="302.73" y="494.96" width="1.45" height="9.03" fill="#5689f0"/>
<rect x="302.73" y="503.99" width="1.45" height="10.32" fill="#c1c6cf"/>
<rect x="302.73" y="514.30" width="1.45" height="90.00" fill="#fd951c"/>
<rect x="305.17" y="467.88" width="1.45" height="21.92" fill="#5689f0"/>
<rect x="305.17" y="489.80" width="1.45" height="14.19" fill="#c1c6cf"/>
<rect x="305.17" y="503.99" width="1.45" height="100.31" fill="#fd951c"/>
<rect x="307.61" y="459.36" width="1.45" height="11.09" fill="#5689f0"/>
<rect x="307.61" y="470.46" width="1.45" height="28.37" fill="#c1c6cf"/>
<rect x="307.61" y="498.83" width="1.45" height="105.47" fill="#fd951c"/>
<rect x="310.05" y="478.97" width="1.45" height="5.16" fill="#5689f0"/>
<rect x="310.05" y="484.13" width="1.45" height="32.76" fill="#c1c6cf"/>
<rect x="310.05" y="516.88" width="1.45" height="87.42" fill="#fd951c"/>
<rect x="312.49" y="494.96" width="1.45" height="6.45" fill="#5689f0"/>
<rect x="312.49" y="501.41" width="1.45" height="23.99" fill="#c1c6cf"/>
<rect x="312.49" y="525.39" width="1.45" height="78.91" fill="#fd951c"/>
<rect x="314.94" y="476.90" width="1.45" height="9.03" fill="#5689f0"/>
<rect x="314.94" y="485.93" width="1.45" height="18.06" fill="#c1c6cf"/>
<rect x="314.94" y="503.99" width="1.45" height="100.31" fill="#fd951c"/>
<rect x="317.38" y="433.06" width="1.45" height="15.48" fill="#5689f0"/>
<rect x="317.38" y="448.53" width="1.45" height="21.92" fill="#c1c6cf"/>
<rect x="317.38" y="470.46" width="1.45" height="133.84" fill="#fd951c"/>
<rect x="319.82" y="476.90" width="1.45" height="9.03" fill="#5689f0"/>
<rect x="319.82" y="485.93" width="1.45" height="21.92" fill="#c1c6cf"/>
<rect x="319.82" y="507.86" width="1.45" height="96.44" fill="#fd951c"/>
<rect x="322.26" y="487.74" width="1.45" height="7.22" fill="#5689f0"/>
<rect x="322.26" y="494.96" width="1.45" height="25.79" fill="#c1c6cf"/>
<rect x="322.26" y="520.75" width="1.45" height="83.55" fill="#fd951c"/>
<rect x="324.70" y="474.84" width="1.45" height="11.09" fill="#5689f0"/>
<rect x="324.70" y="485.93" width="1.45" height="15.48" fill="#c1c6cf"/>
<rect x="324.70" y="501.41" width="1.45" height="102.89" fill="#fd951c"/>
<rect x="327.14" y="509.92" width="1.45" height="4.38" fill="#5689f0"/>
<rect x="327.14" y="514.30" width="1.45" height="15.48" fill="#c1c6cf"/>
<rect x="327.14" y="529.78" width="1.45" height="74.52" fill="#fd951c"/>
<rect x="329.59" y="549.64" width="1.45" height="4.64" fill="#5689f0"/>
<rect x="329.59" y="554.28" width="1.45" height="17.54" fill="#c1c6cf"/>
<rect x="329.59" y="571.82" width="1.45" height="32.48" fill="#fd951c"/>
<rect x="332.03" y="529.78" width="1.45" height="4.38" fill="#5689f0"/>
<rect x="332.03" y="534.16" width="1.45" height="15.48" fill="#c1c6cf"/>
<rect x="332.03" y="549.64" width="1.45" height="54.66" fill="#fd951c"/>
<rect x="334.47" y="576.21" width="1.45" height="1.81" fill="#5689f0"/>
<rect x="334.47" y="578.01" width="1.45" height="6.71" fill="#c1c6cf"/>
<rect x="334.47" y="584.72" width="1.45" height="19.58" fill="#fd951c"/>
<rect x="336.91" y="558.15" width="1.45" height="6.45" fill="#5689f0"/>
<rect x="336.91" y="564.60" width="1.45" height="5.16" fill="#c1c6cf"/>
<rect x="336.91" y="569.76" width="1.45" height="34.54" fill="#fd951c"/>
<rect x="339.35" y="532.36" width="1.45" height="8.51" fill="#5689f0"/>
<rect x="339.35" y="540.87" width="1.45" height="8.77" fill="#c1c6cf"/>
<rect x="339.35" y="549.64" width="1.45" height="54.66" fill="#fd951c"/>
<rect x="341.79" y="560.73" width="1.45" height="1.81" fill="#5689f0"/>
<rect x="341.79" y="562.54" width="1.45" height="7.22" fill="#c1c6cf"/>
<rect x="341.79" y="569.76" width="1.45" height="34.54" fill="#fd951c"/>
<rect x="344.24" y="527.72" width="1.45" height="20.12" fill="#c1c6cf"/>
<rect x="344.24" y="547.83" width="1.45" height="56.47" fill="#fd951c"/>
<rect x="346.68" y="505.79" width="1.45" height="6.71" fill="#5689f0"/>
<rect x="346.68" y="512.50" width="1.45" height="21.67" fill="#c1c6cf"/>
<rect x="346.68" y="534.16" width="1.45" height="70.14" fill="#fd951c"/>
<rect x="349.12" y="485.93" width="1.45" height="11.09" fill="#5689f0"/>
<rect x="349.12" y="497.02" width="1.45" height="23.73" fill="#c1c6cf"/>
<rect x="349.12" y="520.75" width="1.45" height="83.55" fill="#fd951c"/>
<rect x="351.56" y="476.90" width="1.45" height="10.83" fill="#5689f0"/>
<rect x="351.56" y="487.74" width="1.45" height="37.66" fill="#c1c6cf"/>
<rect x="351.56" y="525.39" width="1.45" height="78.91" fill="#fd951c"/>
<rect x="354.00" y="444.15" width="1.45" height="15.22" fill="#5689f0"/>
<rect x="354.00" y="459.36" width="1.45" height="22.18" fill="#c1c6cf"/>
<rect x="354.00" y="481.55" width="1.45" height="122.75" fill="#fd951c"/>
<rect x="356.45" y="492.38" width="1.45" height="9.03" fill="#5689f0"/>
<rect x="356.45" y="501.41" width="1.45" height="11.09" fill="#c1c6cf"/>
<rect x="356.45" y="512.50" width="1.45" height="91.80" fill="#fd951c"/>
<rect x="358.89" y="485.93" width="1.45" height="11.09" fill="#5689f0"/>
<rect x="358.89" y="497.02" width="1.45" height="12.90" fill="#c1c6cf"/>
<rect x="358.89" y="509.92" width="1.45" height="94.38" fill="#fd951c"/>
<rect x="361.33" y="453.17" width="1.45" height="10.32" fill="#5689f0"/>
<rect x="361.33" y="463.49" width="1.45" height="33.53" fill="#c1c6cf"/>
<rect x="361.33" y="497.02" width="1.45" height="107.28" fill="#fd951c"/>
<rect x="363.77" y="479.48" width="1.45" height="6.45" fill="#5689f0"/>
<rect x="363.77" y="485.93" width="1.45" height="11.09" fill="#c1c6cf"/>
<rect x="363.77" y="497.02" width="1.45" height="107.28" fill="#fd951c"/>
<rect x="366.21" y="498.83" width="1.45" height="6.45" fill="#5689f0"/>
<rect x="366.21" y="505.28" width="1.45" height="14.19" fill="#c1c6cf"/>
<rect x="366.21" y="519.46" width="1.45" height="84.84" fill="#fd951c"/>
<rect x="368.65" y="446.47" width="1.45" height="17.02" fill="#5689f0"/>
<rect x="368.65" y="463.49" width="1.45" height="24.25" fill="#c1c6cf"/>
<rect x="368.65" y="487.74" width="1.45" height="116.56" fill="#fd951c"/>
<rect x="371.10" y="464.01" width="1.45" height="10.83" fill="#5689f0"/>
<rect x="371.10" y="474.84" width="1.45" height="33.02" fill="#c1c6cf"/>
<rect x="371.10" y="507.86" width="1.45" height="96.44" fill="#fd951c"/>
<rect x="373.54" y="479.48" width="1.45" height="10.83" fill="#5689f0"/>
<rect x="373.54" y="490.32" width="1.45" height="11.09" fill="#c1c6cf"/>
<rect x="373.54" y="501.41" width="1.45" height="102.89" fill="#fd951c"/>
<rect x="375.98" y="466.07" width="1.45" height="1.81" fill="#5689f0"/>
<rect x="375.98" y="467.88" width="1.45" height="13.67" fill="#c1c6cf"/>
<rect x="375.98" y="481.55" width="1.45" height="122.75" fill="#fd951c"/>
<rect x="378.42" y="440.02" width="1.45" height="17.54" fill="#5689f0"/>
<rect x="378.42" y="457.56" width="1.45" height="15.48" fill="#c1c6cf"/>
<rect x="378.42" y="473.03" width="1.45" height="131.27" fill="#fd951c"/>
<rect x="380.86" y="468.65" width="1.45" height="15.48" fill="#5689f0"/>
<rect x="380.86" y="484.13" width="1.45" height="19.86" fill="#c1c6cf"/>
<rect x="380.86" y="503.99" width="1.45" height="100.31" fill="#fd951c"/>
<rect x="383.30" y="498.83" width="1.45" height="5.16" fill="#5689f0"/>
<rect x="383.30" y="503.99" width="1.45" height="25.79" fill="#c1c6cf"/>
<rect x="383.30" y="529.78" width="1.45" height="74.52" fill="#fd951c"/>
<rect x="385.75" y="507.86" width="1.45" height="4.64" fill="#5689f0"/>
<rect x="385.75" y="512.50" width="1.45" height="21.67" fill="#c1c6cf"/>
<rect x="385.75" y="534.16" width="1.45" height="70.14" fill="#fd951c"/>
<rect x="388.19" y="556.35" width="1.45" height="13.41" fill="#c1c6cf"/>
<rect x="388.19" y="569.76" width="1.45" height="34.54" fill="#fd951c"/>
<rect x="390.63" y="512.50" width="1.45" height="10.83" fill="#5689f0"/>
<rect x="390.63" y="523.33" width="1.45" height="17.54" fill="#c1c6cf"/>
<rect x="390.63" y="540.87" width="1.45" height="63.43" fill="#fd951c"/>
<rect x="393.07" y="580.08" width="1.45" height="13.41" fill="#c1c6cf"/>
<rect x="393.07" y="593.49" width="1.45" height="10.81" fill="#fd951c"/>
<rect x="395.51" y="558.15" width="1.45" height="2.58" fill="#5689f0"/>
<rect x="395.51" y="560.73" width="1.45" height="12.90" fill="#c1c6cf"/>
<rect x="395.51" y="573.63" width="1.45" height="30.67" fill="#fd951c"/>
<rect x="397.95" y="536.23" width="1.45" height="9.03" fill="#5689f0"/>
<rect x="397.95" y="545.26" width="1.45" height="4.38" fill="#c1c6cf"/>
<rect x="397.95" y="549.64" width="1.45" height="54.66" fill="#fd951c"/>
<rect x="400.40" y="571.82" width="1.45" height="4.38" fill="#5689f0"/>
<rect x="400.40" y="576.21" width="1.45" height="6.45" fill="#c1c6cf"/>
<rect x="400.40" y="582.66" width="1.45" height="21.64" fill="#fd951c"/>
<rect x="402.84" y="527.72" width="1.45" height="2.06" fill="#5689f0"/>
<rect x="402.84" y="529.78" width="1.45" height="24.50" fill="#c1c6cf"/>
<rect x="402.84" y="554.28" width="1.45" height="50.02" fill="#fd951c"/>
<rect x="405.28" y="505.79" width="1.45" height="12.38" fill="#5689f0"/>
<rect x="405.28" y="518.17" width="1.45" height="11.61" fill="#c1c6cf"/>
<rect x="405.28" y="529.78" width="1.45" height="74.52" fill="#fd951c"/>
<rect x="407.72" y="503.21" width="1.45" height="6.71" fill="#5689f0"/>
<rect x="407.72" y="509.92" width="1.45" height="22.44" fill="#c1c6cf"/>
<rect x="407.72" y="532.36" width="1.45" height="71.94" fill="#fd951c"/>
<rect x="410.16" y="466.07" width="1.45" height="13.41" fill="#5689f0"/>
<rect x="410.16" y="479.48" width="1.45" height="34.82" fill="#c1c6cf"/>
<rect x="410.16" y="514.30" width="1.45" height="90.00" fill="#fd951c"/>
<rect x="412.60" y="507.86" width="1.45" height="6.45" fill="#5689f0"/>
<rect x="412.60" y="514.30" width="1.45" height="9.03" fill="#c1c6cf"/>
<rect x="412.60" y="523.33" width="1.45" height="80.97" fill="#fd951c"/>
<rect x="415.05" y="470.46" width="1.45" height="4.38" fill="#5689f0"/>
<rect x="415.05" y="474.84" width="1.45" height="22.18" fill="#c1c6cf"/>
<rect x="415.05" y="497.02" width="1.45" height="107.28" fill="#fd951c"/>
<rect x="417.49" y="481.55" width="1.45" height="6.19" fill="#5689f0"/>
<rect x="417.49" y="487.74" width="1.45" height="22.18" fill="#c1c6cf"/>
<rect x="417.49" y="509.92" width="1.45" height="94.38" fill="#fd951c"/>
<rect x="419.93" y="476.90" width="1.45" height="9.03" fill="#5689f0"/>
<rect x="419.93" y="485.93" width="1.45" height="15.48" fill="#c1c6cf"/>
<rect x="419.93" y="501.41" width="1.45" height="102.89" fill="#fd951c"/>
<rect x="422.37" y="487.74" width="1.45" height="2.06" fill="#5689f0"/>
<rect x="422.37" y="489.80" width="1.45" height="24.50" fill="#c1c6cf"/>
<rect x="422.37" y="514.30" width="1.45" height="90.00" fill="#fd951c"/>
<rect x="424.81" y="497.02" width="1.45" height="4.38" fill="#5689f0"/>
<rect x="424.81" y="501.41" width="1.45" height="12.90" fill="#c1c6cf"/>
<rect x="424.81" y="514.30" width="1.45" height="90.00" fill="#fd951c"/>
<rect x="427.25" y="492.38" width="1.45" height="4.64" fill="#5689f0"/>
<rect x="427.25" y="497.02" width="1.45" height="30.69" fill="#c1c6cf"/>
<rect x="427.25" y="527.72" width="1.45" height="76.58" fill="#fd951c"/>
<rect x="429.70" y="481.55" width="1.45" height="10.83" fill="#5689f0"/>
<rect x="429.70" y="492.38" width="1.45" height="28.37" fill="#c1c6cf"/>
<rect x="429.70" y="520.75" width="1.45" height="83.55" fill="#fd951c"/>
<rect x="432.14" y="461.43" width="1.45" height="9.03" fill="#5689f0"/>
<rect x="432.14" y="470.46" width="1.45" height="24.50" fill="#c1c6cf"/>
<rect x="432.14" y="494.96" width="1.45" height="109.34" fill="#fd951c"/>
<rect x="434.58" y="444.15" width="1.45" height="15.22" fill="#5689f0"/>
<rect x="434.58" y="459.36" width="1.45" height="17.54" fill="#c1c6cf"/>
<rect x="434.58" y="476.90" width="1.45" height="127.40" fill="#fd951c"/>
<rect x="437.02" y="481.55" width="1.45" height="8.77" fill="#5689f0"/>
<rect x="437.02" y="490.32" width="1.45" height="17.54" fill="#c1c6cf"/>
<rect x="437.02" y="507.86" width="1.45" height="96.44" fill="#fd951c"/>
<rect x="439.46" y="473.03" width="1.45" height="21.92" fill="#5689f0"/>
<rect x="439.46" y="494.96" width="1.45" height="19.34" fill="#c1c6cf"/>
<rect x="439.46" y="514.30" width="1.45" height="90.00" fill="#fd951c"/>
<rect x="441.90" y="525.39" width="1.45" height="6.96" fill="#5689f0"/>
<rect x="441.90" y="532.36" width="1.45" height="11.09" fill="#c1c6cf"/>
<rect x="441.90" y="543.45" width="1.45" height="60.85" fill="#fd951c"/>
<rect x="444.35" y="485.93" width="1.45" height="12.90" fill="#5689f0"/>
<rect x="444.35" y="498.83" width="1.45" height="20.63" fill="#c1c6cf"/>
<rect x="444.35" y="519.46" width="1.45" height="84.84" fill="#fd951c"/>
<rect x="446.79" y="558.15" width="1.45" height="4.38" fill="#5689f0"/>
<rect x="446.79" y="562.54" width="1.45" height="11.86" fill="#c1c6cf"/>
<rect x="446.79" y="574.40" width="1.45" height="29.90" fill="#fd951c"/>
<rect x="449.23" y="518.69" width="1.45" height="9.03" fill="#5689f0"/>
<rect x="449.23" y="527.72" width="1.45" height="21.92" fill="#c1c6cf"/>
<rect x="449.23" y="549.64" width="1.45" height="54.66" fill="#fd951c"/>
<rect x="451.67" y="576.21" width="1.45" height="6.45" fill="#c1c6cf"/>
<rect x="451.67" y="582.66" width="1.45" height="21.64" fill="#fd951c"/>
<rect x="454.11" y="571.05" width="1.45" height="1.29" fill="#5689f0"/>
<rect x="454.11" y="572.34" width="1.45" height="5.67" fill="#c1c6cf"/>
<rect x="454.11" y="578.01" width="1.45" height="26.29" fill="#fd951c"/>
<rect x="456.55" y="556.35" width="1.45" height="15.48" fill="#c1c6cf"/>
<rect x="456.55" y="571.82" width="1.45" height="32.48" fill="#fd951c"/>
<rect x="459.00" y="558.15" width="1.45" height="2.58" fill="#5689f0"/>
<rect x="459.00" y="560.73" width="1.45" height="12.90" fill="#c1c6cf"/>
<rect x="459.00" y="573.63" width="1.45" height="30.67" fill="#fd951c"/>
<rect x="461.44" y="525.39" width="1.45" height="22.44" fill="#c1c6cf"/>
<rect x="461.44" y="547.83" width="1.45" height="56.47" fill="#fd951c"/>
<rect x="463.88" y="525.39" width="1.45" height="6.96" fill="#5689f0"/>
<rect x="463.88" y="532.36" width="1.45" height="11.09" fill="#c1c6cf"/>
<rect x="463.88" y="543.45" width="1.45" height="60.85" fill="#fd951c"/>
<rect x="466.32" y="484.13" width="1.45" height="19.86" fill="#5689f0"/>
<rect x="466.32" y="503.99" width="1.45" height="21.41" fill="#c1c6cf"/>
<rect x="466.32" y="525.39" width="1.45" height="78.91" fill="#fd951c"/>
<rect x="468.76" y="497.02" width="1.45" height="1.81" fill="#5689f0"/>
<rect x="468.76" y="498.83" width="1.45" height="33.53" fill="#c1c6cf"/>
<rect x="468.76" y="532.36" width="1.45" height="71.94" fill="#fd951c"/>
<rect x="471.21" y="498.83" width="1.45" height="11.09" fill="#5689f0"/>
<rect x="471.21" y="509.92" width="1.45" height="22.44" fill="#c1c6cf"/>
<rect x="471.21" y="532.36" width="1.45" height="71.94" fill="#fd951c"/>
<rect x="473.65" y="457.56" width="1.45" height="12.90" fill="#5689f0"/>
<rect x="473.65" y="470.46" width="1.45" height="24.50" fill="#c1c6cf"/>
<rect x="473.65" y="494.96" width="1.45" height="109.34" fill="#fd951c"/>
<rect x="476.09" y="505.28" width="1.45" height="2.58" fill="#5689f0"/>
<rect x="476.09" y="507.86" width="1.45" height="17.54" fill="#c1c6cf"/>
<rect x="476.09" y="525.39" width="1.45" height="78.91" fill="#fd951c"/>
<rect x="478.53" y="473.03" width="1.45" height="14.70" fill="#5689f0"/>
<rect x="478.53" y="487.74" width="1.45" height="20.12" fill="#c1c6cf"/>
<rect x="478.53" y="507.86" width="1.45" height="96.44" fill="#fd951c"/>
<rect x="480.97" y="562.54" width="1.45" height="4.64" fill="#5689f0"/>
<rect x="480.97" y="567.18" width="1.45" height="37.12" fill="#fd951c"/>
<line x1="605.2" y1="422.2" x2="1016.2" y2="422.2" stroke="#eceef2" stroke-width="1"/>
<line x1="605.2" y1="467.8" x2="1016.2" y2="467.8" stroke="#eceef2" stroke-width="1"/>
<line x1="605.2" y1="513.3" x2="1016.2" y2="513.3" stroke="#eceef2" stroke-width="1"/>
<line x1="605.2" y1="558.8" x2="1016.2" y2="558.8" stroke="#eceef2" stroke-width="1"/>
<line x1="605.2" y1="604.3" x2="1016.2" y2="604.3" stroke="#e3e6ea" stroke-width="1"/>
<line x1="605.2" y1="422.2" x2="605.2" y2="604.3" stroke="#eceef2" stroke-width="1"/>
<text x="597.2" y="424.8" text-anchor="end" class="ax">6.0K%</text>
<text x="597.2" y="470.40000000000003" text-anchor="end" class="ax">4.5K%</text>
<text x="597.2" y="515.9" text-anchor="end" class="ax">3.0K%</text>
<text x="597.2" y="561.4" text-anchor="end" class="ax">1.4K%</text>
<text x="597.2" y="606.9" text-anchor="end" class="ax">-100.0%</text>
<line x1="606.50" y1="604.3" x2="606.50" y2="608" stroke="#e1e4e9" stroke-width="1"/>
<text x="606.50" y="617.3" text-anchor="middle" class="ax">12am</text>
<line x1="623.65" y1="604.3" x2="623.65" y2="608" stroke="#e1e4e9" stroke-width="1"/>
<text x="623.65" y="617.3" text-anchor="middle" class="ax">7am</text>
<line x1="640.80" y1="604.3" x2="640.80" y2="608" stroke="#e1e4e9" stroke-width="1"/>
<text x="640.80" y="617.3" text-anchor="middle" class="ax">2pm</text>
<line x1="657.95" y1="604.3" x2="657.95" y2="608" stroke="#e1e4e9" stroke-width="1"/>
<text x="657.95" y="617.3" text-anchor="middle" class="ax">9pm</text>
<line x1="675.10" y1="604.3" x2="675.10" y2="608" stroke="#e1e4e9" stroke-width="1"/>
<text x="675.10" y="617.3" text-anchor="middle" class="ax">4am</text>
<line x1="692.25" y1="604.3" x2="692.25" y2="608" stroke="#e1e4e9" stroke-width="1"/>
<text x="692.25" y="617.3" text-anchor="middle" class="ax">11am</text>
<line x1="709.40" y1="604.3" x2="709.40" y2="608" stroke="#e1e4e9" stroke-width="1"/>
<text x="709.40" y="617.3" text-anchor="middle" class="ax">6pm</text>
<line x1="726.55" y1="604.3" x2="726.55" y2="608" stroke="#e1e4e9" stroke-width="1"/>
<text x="726.55" y="617.3" text-anchor="middle" class="ax">1am</text>
<line x1="743.70" y1="604.3" x2="743.70" y2="608" stroke="#e1e4e9" stroke-width="1"/>
<text x="743.70" y="617.3" text-anchor="middle" class="ax">8am</text>
<line x1="760.85" y1="604.3" x2="760.85" y2="608" stroke="#e1e4e9" stroke-width="1"/>
<text x="760.85" y="617.3" text-anchor="middle" class="ax">3pm</text>
<line x1="778.00" y1="604.3" x2="778.00" y2="608" stroke="#e1e4e9" stroke-width="1"/>
<text x="778.00" y="617.3" text-anchor="middle" class="ax">10pm</text>
<line x1="795.15" y1="604.3" x2="795.15" y2="608" stroke="#e1e4e9" stroke-width="1"/>
<text x="795.15" y="617.3" text-anchor="middle" class="ax">5am</text>
<line x1="812.30" y1="604.3" x2="812.30" y2="608" stroke="#e1e4e9" stroke-width="1"/>
<text x="812.30" y="617.3" text-anchor="middle" class="ax">12pm</text>
<line x1="829.45" y1="604.3" x2="829.45" y2="608" stroke="#e1e4e9" stroke-width="1"/>
<text x="829.45" y="617.3" text-anchor="middle" class="ax">7pm</text>
<line x1="846.60" y1="604.3" x2="846.60" y2="608" stroke="#e1e4e9" stroke-width="1"/>
<text x="846.60" y="617.3" text-anchor="middle" class="ax">2am</text>
<line x1="863.75" y1="604.3" x2="863.75" y2="608" stroke="#e1e4e9" stroke-width="1"/>
<text x="863.75" y="617.3" text-anchor="middle" class="ax">9am</text>
<line x1="880.90" y1="604.3" x2="880.90" y2="608" stroke="#e1e4e9" stroke-width="1"/>
<text x="880.90" y="617.3" text-anchor="middle" class="ax">4pm</text>
<line x1="898.05" y1="604.3" x2="898.05" y2="608" stroke="#e1e4e9" stroke-width="1"/>
<text x="898.05" y="617.3" text-anchor="middle" class="ax">11pm</text>
<line x1="915.20" y1="604.3" x2="915.20" y2="608" stroke="#e1e4e9" stroke-width="1"/>
<text x="915.20" y="617.3" text-anchor="middle" class="ax">6am</text>
<line x1="932.35" y1="604.3" x2="932.35" y2="608" stroke="#e1e4e9" stroke-width="1"/>
<text x="932.35" y="617.3" text-anchor="middle" class="ax">1pm</text>
<line x1="949.50" y1="604.3" x2="949.50" y2="608" stroke="#e1e4e9" stroke-width="1"/>
<text x="949.50" y="617.3" text-anchor="middle" class="ax">8pm</text>
<line x1="966.65" y1="604.3" x2="966.65" y2="608" stroke="#e1e4e9" stroke-width="1"/>
<text x="966.65" y="617.3" text-anchor="middle" class="ax">3am</text>
<line x1="983.80" y1="604.3" x2="983.80" y2="608" stroke="#e1e4e9" stroke-width="1"/>
<text x="983.80" y="617.3" text-anchor="middle" class="ax">10am</text>
<line x1="1000.95" y1="604.3" x2="1000.95" y2="608" stroke="#e1e4e9" stroke-width="1"/>
<text x="1000.95" y="617.3" text-anchor="middle" class="ax">5pm</text>
<text x="606.8" y="627.5" text-anchor="middle" class="ax">Jun 20</text>
<text x="898.7" y="627.5" text-anchor="middle" class="ax">Jun 25</text>
<text transform="translate(571.4,513.3) rotate(-90)" text-anchor="middle" class="ax" style="font-size:8px">Occurrences</text>
<path d="M638.2,565.1 L635.1,571.8" fill="none" stroke="#b3b9c3" stroke-width="2" stroke-linecap="round" stroke-linejoin="round"/>
<path d="M696.7,562.0 C697.2,566.9 698.4,592.1 699.3,591.2 C700.3,590.2 701.9,562.1 702.4,556.3" fill="none" stroke="#b3b9c3" stroke-width="2" stroke-linecap="round" stroke-linejoin="round"/>
<path d="M706.4,565.1 L709.8,572.3" fill="none" stroke="#b3b9c3" stroke-width="2" stroke-linecap="round" stroke-linejoin="round"/>
<path d="M770.2,580.1 L773.5,587.8" fill="none" stroke="#b3b9c3" stroke-width="2" stroke-linecap="round" stroke-linejoin="round"/>
<path d="M818.1,565.1 C817.6,568.9 816.4,583.2 815.5,587.8 C814.5,592.5 812.9,592.1 812.4,593.0" fill="none" stroke="#b3b9c3" stroke-width="2" stroke-linecap="round" stroke-linejoin="round"/>
<path d="M830.4,580.6 L833.0,568.5" fill="none" stroke="#b3b9c3" stroke-width="2" stroke-linecap="round" stroke-linejoin="round"/>
<path d="M856.8,574.4 C857.4,573.4 859.8,571.5 860.6,568.5 C861.5,565.5 861.7,558.4 861.9,556.3" fill="none" stroke="#b3b9c3" stroke-width="2" stroke-linecap="round" stroke-linejoin="round"/>
<path d="M866.6,596.8 C867.4,590.7 870.3,559.7 871.7,560.0 C873.1,560.2 874.3,591.8 874.8,598.1" fill="none" stroke="#b3b9c3" stroke-width="2" stroke-linecap="round" stroke-linejoin="round"/>
<path d="M889.0,593.0 L891.6,577.0" fill="none" stroke="#b3b9c3" stroke-width="2" stroke-linecap="round" stroke-linejoin="round"/>
<path d="M898.0,586.5 C898.6,586.1 900.0,583.7 901.1,583.9 C902.3,584.2 904.4,587.2 905.0,587.8" fill="none" stroke="#b3b9c3" stroke-width="2" stroke-linecap="round" stroke-linejoin="round"/>
<path d="M923.2,592.5 C923.6,589.7 924.4,579.1 925.3,576.2 C926.1,573.3 927.9,575.1 928.4,574.9" fill="none" stroke="#b3b9c3" stroke-width="2" stroke-linecap="round" stroke-linejoin="round"/>
<path d="M945.1,580.1 L948.5,580.1" fill="none" stroke="#b3b9c3" stroke-width="2" stroke-linecap="round" stroke-linejoin="round"/>
<path d="M973.5,577.5 C973.8,579.6 974.2,592.4 975.3,589.9 C976.5,587.4 979.6,567.1 980.5,562.5" fill="none" stroke="#b3b9c3" stroke-width="2" stroke-linecap="round" stroke-linejoin="round"/>
<path d="M980.5,597.6 L983.1,589.9" fill="none" stroke="#4f83ec" stroke-width="2" stroke-linecap="round"/>
<path d="M617.5,505.8 L620.4,505.8 Q621.8,505.8 622.1,507.8 L625.8,560.0" fill="none" stroke="#f8900f" stroke-width="2.3" stroke-linecap="round" stroke-linejoin="round"/>
<path d="M630.2,542.7 L633.0,567.7" fill="none" stroke="#f8900f" stroke-width="2.3" stroke-linecap="round" stroke-linejoin="round"/>
<path d="M637.7,481.5 C638.1,490.3 639.4,534.2 640.2,534.2 C641.1,534.2 642.0,478.0 642.8,481.5 C643.7,485.1 644.6,560.0 645.4,555.6 C646.2,551.1 646.9,459.3 647.7,455.0 C648.5,450.7 649.4,525.8 650.3,529.8 C651.2,533.8 652.1,475.4 652.9,479.0 C653.7,482.5 654.6,539.2 655.0,551.2" fill="none" stroke="#f8900f" stroke-width="2.3" stroke-linecap="round" stroke-linejoin="round"/>
<path d="M676.9,508.4 C677.4,509.9 679.1,517.5 680.0,517.7 C680.8,517.8 681.3,518.2 682.0,509.1 C682.8,500.1 683.8,463.6 684.6,463.5 C685.5,463.4 686.3,511.4 687.2,508.4 C688.1,505.4 689.4,455.9 689.8,445.4" fill="none" stroke="#f8900f" stroke-width="2.3" stroke-linecap="round" stroke-linejoin="round"/>
<path d="M694.7,445.4 C695.1,458.8 696.1,524.4 697.3,525.4 C698.5,526.3 700.4,448.1 701.9,451.1 C703.4,454.2 704.9,539.8 706.0,543.7 C707.2,547.6 708.1,487.0 708.9,474.3 C709.6,461.7 709.9,469.0 710.4,467.9 C710.9,466.8 711.4,451.8 712.0,467.9 C712.6,483.9 713.7,548.0 714.0,564.1" fill="none" stroke="#f8900f" stroke-width="2.3" stroke-linecap="round" stroke-linejoin="round"/>
<path d="M718.6,548.6 L721.9,577.0" fill="none" stroke="#f8900f" stroke-width="2.3" stroke-linecap="round" stroke-linejoin="round"/>
<path d="M728.4,534.9 L731.5,579.6" fill="none" stroke="#f8900f" stroke-width="2.3" stroke-linecap="round" stroke-linejoin="round"/>
<path d="M736.1,556.3 C736.5,557.5 737.4,575.8 738.7,563.3 C740.0,550.8 742.6,482.7 743.9,481.5 C745.1,480.4 745.6,540.0 746.4,556.3 C747.3,572.7 748.2,579.5 749.0,579.6 C749.9,579.6 750.8,559.6 751.6,556.9 C752.4,554.2 752.9,582.4 753.7,563.3 C754.4,544.2 755.4,446.0 756.2,442.1 C757.1,438.2 758.0,525.2 758.8,540.1 C759.6,555.0 760.1,527.6 760.9,531.6 C761.7,535.6 762.6,564.4 763.5,564.1 C764.3,563.8 765.2,533.3 766.0,529.8 C766.9,526.2 767.8,542.4 768.6,542.7 C769.5,543.0 770.4,529.7 771.2,531.6 C772.0,533.5 772.5,557.2 773.3,554.3 C774.0,551.4 774.9,512.1 775.9,514.3 C776.8,516.5 778.2,558.8 778.7,567.7" fill="none" stroke="#f8900f" stroke-width="2.3" stroke-linecap="round" stroke-linejoin="round"/>
<path d="M787.7,585.2 C788.2,575.4 789.9,530.6 790.8,526.4 C791.8,522.2 793.0,554.4 793.4,560.0" fill="none" stroke="#f8900f" stroke-width="2.3" stroke-linecap="round" stroke-linejoin="round"/>
<path d="M797.8,561.8 C798.2,552.9 799.3,513.0 800.1,508.6 C800.9,504.3 801.6,539.3 802.4,535.7 C803.3,532.1 804.4,488.7 805.3,487.2 C806.2,485.7 807.0,523.1 807.8,526.7 C808.7,530.3 809.6,502.5 810.4,508.6 C811.3,514.7 812.1,558.8 813.0,563.3 C813.9,567.8 815.2,540.3 815.6,535.7" fill="none" stroke="#f8900f" stroke-width="2.3" stroke-linecap="round" stroke-linejoin="round"/>
<path d="M820.1,484.6 C820.6,485.9 821.9,483.9 822.7,492.4 C823.5,500.9 824.2,547.4 825.0,535.7 C825.8,524.0 826.7,421.7 827.6,422.2 C828.5,422.7 829.2,531.9 830.4,538.8 C831.6,545.7 833.7,456.6 834.8,463.5 C836.0,470.4 836.5,560.4 837.4,580.1 C838.3,599.7 839.1,589.7 840.0,581.4 C840.8,573.0 841.7,530.0 842.6,529.8 C843.4,529.6 844.3,571.7 845.1,580.1 C846.0,588.5 846.9,588.5 847.7,580.1 C848.6,571.7 849.5,529.8 850.3,529.8 C851.1,529.8 851.6,574.2 852.4,580.1 C853.1,586.0 854.5,567.6 855.0,565.1" fill="none" stroke="#f8900f" stroke-width="2.3" stroke-linecap="round" stroke-linejoin="round"/>
<path d="M859.3,490.3 C859.8,491.3 861.1,486.4 861.9,496.2 C862.8,506.0 863.7,541.5 864.5,549.1 C865.3,556.7 865.8,537.1 866.6,541.9 C867.3,546.7 868.2,592.1 869.1,578.0 C870.1,564.0 871.3,465.3 872.2,457.6 C873.2,449.8 874.4,519.2 874.8,531.6" fill="none" stroke="#f8900f" stroke-width="2.3" stroke-linecap="round" stroke-linejoin="round"/>
<path d="M878.7,551.2 C879.2,538.0 881.1,471.3 882.0,472.3 C883.0,473.2 883.5,564.8 884.6,556.9 C885.8,549.0 887.8,427.0 889.0,424.8 C890.2,422.7 890.4,529.9 891.6,544.0 C892.8,558.0 894.9,507.0 896.2,509.1 C897.5,511.3 898.3,555.4 899.3,556.9 C900.3,558.3 901.2,517.9 902.2,517.7 C903.2,517.4 904.7,549.3 905.3,555.6" fill="none" stroke="#f8900f" stroke-width="2.3" stroke-linecap="round" stroke-linejoin="round"/>
<path d="M905.7,562.5 C906.2,563.3 907.6,564.0 909.0,567.2 C910.4,570.3 912.9,592.1 914.2,581.4 C915.5,570.6 915.9,515.2 916.8,502.7 C917.6,490.2 918.3,494.3 919.3,506.6 C920.4,518.8 921.8,567.0 923.2,576.2 C924.6,585.4 926.6,562.0 927.9,562.0 C929.2,562.0 929.9,573.3 931.0,576.2 C932.0,579.1 932.8,592.3 934.1,579.6 C935.3,566.8 937.6,501.9 938.7,499.6 C939.8,497.3 940.0,573.3 940.8,565.9 C941.5,558.5 942.1,453.3 943.3,455.0 C944.6,456.7 946.9,565.3 948.5,576.2 C950.1,587.1 951.7,520.5 952.9,520.2 C954.1,520.0 954.6,567.9 955.5,574.9 C956.3,582.0 957.2,563.8 958.0,562.5 C958.9,561.2 960.2,566.4 960.6,567.2" fill="none" stroke="#f8900f" stroke-width="2.3" stroke-linecap="round" stroke-linejoin="round"/>
<path d="M965.0,568.5 C965.4,567.0 966.7,560.6 967.6,559.4 C968.5,558.3 969.3,567.1 970.2,561.5 C971.0,555.9 971.9,532.8 972.8,525.9 C973.6,519.0 974.5,525.1 975.3,520.2 C976.2,515.4 977.1,488.6 977.9,497.0 C978.8,505.5 979.3,578.1 980.5,571.0 C981.7,564.0 983.9,453.9 985.1,455.0 C986.3,456.1 986.9,563.6 987.7,577.5 C988.6,591.4 989.9,544.8 990.3,538.3" fill="none" stroke="#f8900f" stroke-width="2.3" stroke-linecap="round" stroke-linejoin="round"/>
<circle cx="612.9" cy="547.8" r="1.2" fill="#f8900f"/>
<circle cx="659.9" cy="565.4" r="1.2" fill="#f8900f"/>
<circle cx="667.6" cy="593.7" r="1.2" fill="#f8900f"/>
<circle cx="672.2" cy="520.8" r="1.2" fill="#f8900f"/>
<circle cx="783.1" cy="571.8" r="1.2" fill="#f8900f"/>
<circle cx="689.5" cy="577.5" r="1" fill="#b3b9c3"/>
<circle cx="749.0" cy="580.6" r="1" fill="#b3b9c3"/>
<circle cx="760.9" cy="577.5" r="1" fill="#b3b9c3"/>
<circle cx="778.2" cy="586.5" r="1" fill="#b3b9c3"/>
<circle cx="802.7" cy="577.5" r="1" fill="#b3b9c3"/>
<circle cx="807.7" cy="589.9" r="1" fill="#b3b9c3"/>
<circle cx="825.3" cy="596.8" r="1" fill="#b3b9c3"/>
<circle cx="842.6" cy="583.9" r="1" fill="#b3b9c3"/>
<circle cx="850.3" cy="593.0" r="1" fill="#b3b9c3"/>
<circle cx="935.6" cy="585.8" r="1" fill="#b3b9c3"/>
<circle cx="960.6" cy="574.9" r="1" fill="#b3b9c3"/>
<circle cx="642.8" cy="595.0" r="1" fill="#5689f0"/>
<circle cx="707.0" cy="586.5" r="1" fill="#5689f0"/>
<circle cx="711.6" cy="595.6" r="1" fill="#5689f0"/>
<circle cx="746.2" cy="586.5" r="1" fill="#5689f0"/>
<circle cx="773.0" cy="589.9" r="1" fill="#5689f0"/>
<circle cx="807.7" cy="583.9" r="1" fill="#5689f0"/>
<circle cx="822.7" cy="595.6" r="1" fill="#5689f0"/>
<circle cx="837.4" cy="598.6" r="1" fill="#5689f0"/>
<circle cx="864.5" cy="583.9" r="1" fill="#5689f0"/>
<circle cx="887.2" cy="601.2" r="1" fill="#5689f0"/>
<circle cx="896.7" cy="598.6" r="1" fill="#5689f0"/>
<circle cx="935.6" cy="598.6" r="1" fill="#5689f0"/>
<circle cx="987.7" cy="601.2" r="1" fill="#5689f0"/>
<circle cx="606.6" cy="604.5" r="1.6" fill="#5b6577"/>
</svg>
</body></html>
